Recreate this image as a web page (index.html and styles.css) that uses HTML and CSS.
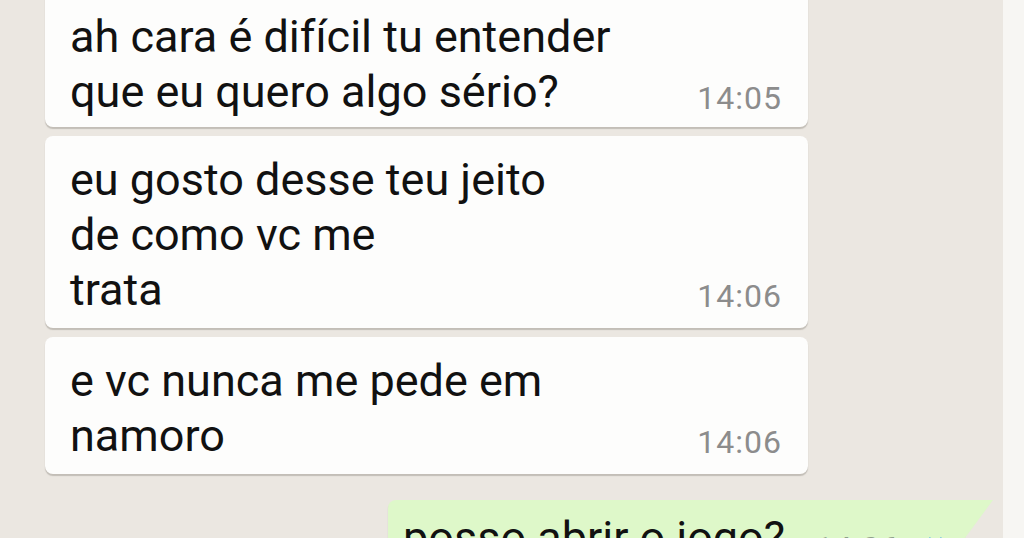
FILE: index.html
```html
<!DOCTYPE html>
<html lang="pt">
  <head>
    <meta charset="UTF-8" />
    <meta name="viewport" content="width=device-width, initial-scale=1.0" />
    <title>Conversa</title>
    <link rel="stylesheet" href="styles.css">
  </head>
  <body>
    <div class="screen">
      <main class="chat">
        <div class="msg in first">
          <p class="text">ah cara é difícil tu entender<br />que eu quero algo sério?</p>
          <span class="time">14:05</span>
        </div>

        <div class="msg in">
          <p class="text">eu gosto desse teu jeito<br />de como vc me<br />trata</p>
          <span class="time">14:06</span>
        </div>

        <div class="msg in">
          <p class="text">e vc nunca me pede em<br />namoro</p>
          <span class="time">14:06</span>
        </div>

        <div class="msg out">
          <p class="text">posso abrir o jogo?</p>
          <span class="time">14:06</span>
          <span class="ticks">
            <svg width="46" height="24" viewBox="0 0 46 24">
              <path d="M2 13 L9 20 L23 4" fill="none" stroke="#5fb8e6" stroke-width="3" />
              <path d="M17 17 L20 20 L34 4" fill="none" stroke="#5fb8e6" stroke-width="3" />
            </svg>
          </span>
        </div>
      </main>
      <div class="edge"></div>
    </div>
  </body>
</html>
```

FILE: styles.css
```css
* {
  margin: 0;
  padding: 0;
  box-sizing: border-box;
}

html,
body {
  height: 538px;
  overflow: hidden;
}

body {
  font-family: Roboto, "Liberation Sans", sans-serif;
  background-color: #ece9e4;
  color: #111;
}

.screen {
  display: flex;
  height: 538px;
  overflow: hidden;
}

.chat {
  width: 1003px;
  height: 538px;
  overflow: hidden;
  background-color: #ebe7e1;
  padding: 0 0 0 45px;
  display: flex;
  flex-direction: column;
  gap: 9px;
}

.edge {
  flex: 1;
  background-color: #f7f6f3;
}

.msg {
  position: relative;
  flex: none;
  display: flex;
  align-items: flex-end;
  border-radius: 8px;
  box-shadow: 0 2px 1px rgba(120, 115, 105, 0.35);
}

.msg.in {
  width: 763px;
  background-color: #fdfdfc;
  padding: 16px 26px 11px 25px;
}

.msg.first {
  margin-top: -10px;
  padding-top: 19px;
  padding-bottom: 8px;
}

.text {
  flex: 1;
  font-size: 45px;
  line-height: 55px;
}

.time {
  font-size: 32px;
  line-height: 32px;
  letter-spacing: 1px;
  color: #8c8c8c;
  margin-bottom: 5px;
}

.msg.out {
  margin-top: 17px;
  margin-left: 343px;
  width: 577px;
  height: 70px;
  background-color: #def8c9;
  border-top-right-radius: 0;
  padding: 10px 0 0 15px;
  align-items: flex-start;
}

.msg.out::after {
  content: "";
  position: absolute;
  top: 0;
  right: -28px;
  border-top: 38px solid #def8c9;
  border-right: 28px solid transparent;
}

.msg.out .text {
  flex: none;
  margin-right: 30px;
}

.msg.out .time {
  margin-top: 22px;
  color: #8fa08a;
}

.ticks {
  margin-top: 24px;
  margin-left: 8px;
}
```
